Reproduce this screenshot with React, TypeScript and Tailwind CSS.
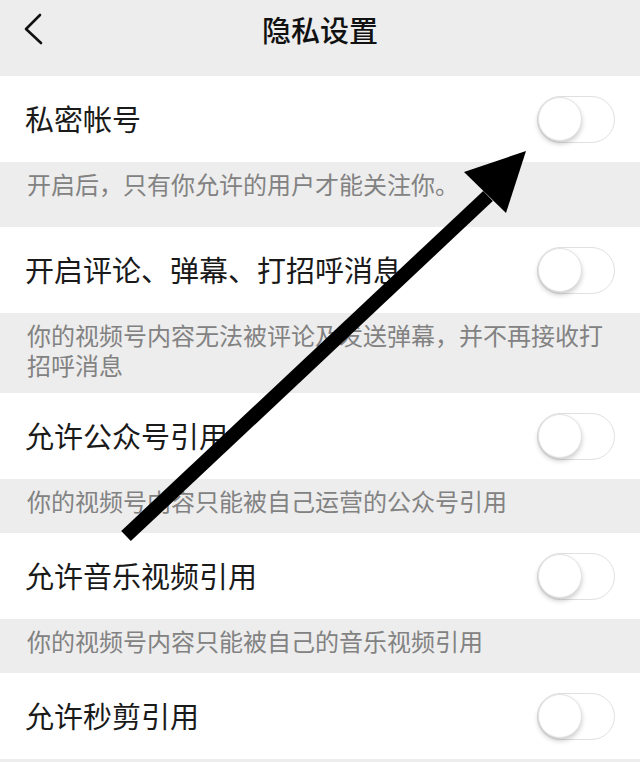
import React from 'react'

const font = { fontFamily: '"Noto Sans CJK SC", "Noto Sans", sans-serif' }

function Toggle() {
  return (
    <div className="relative h-[47px] w-[78px] shrink-0 rounded-full border-[1.5px] border-[#e0e0e0] bg-white">
      <div className="absolute left-[0px] top-[0px] h-[44px] w-[44px] rounded-full border border-[#e2e2e2] bg-white shadow-[0_3px_5px_rgba(0,0,0,0.2)]" />
    </div>
  )
}

const items = [
  { label: '私密帐号', desc: ['开启后，只有你允许的用户才能关注你。'], descCls: 'h-[65px]' },
  { label: '开启评论、弹幕、打招呼消息', desc: ['你的视频号内容无法被评论及发送弹幕，并不再接收打', '招呼消息'], descCls: 'h-[80px]' },
  { label: '允许公众号引用', desc: ['你的视频号内容只能被自己运营的公众号引用'], descCls: 'h-[54px]' },
  { label: '允许音乐视频引用', desc: ['你的视频号内容只能被自己的音乐视频引用'], descCls: 'h-[54px]' },
]

export default function App() {
  return (
    <div className="relative h-[762px] w-[640px] overflow-hidden bg-[#ededed]" style={font}>
      <div className="relative flex h-[60px] items-center justify-center">
        <svg className="absolute left-[22px] top-[12px]" width="24" height="36" viewBox="0 0 24 36">
          <path d="M18 3 L4 17 L19 31" fill="none" stroke="#111" strokeWidth="2.6" strokeLinecap="round" strokeLinejoin="round" />
        </svg>
        <div className="text-[29px] font-medium text-[#111]">隐私设置</div>
      </div>
      <div className="mt-[16px] flex flex-col">
        {items.map((it) => (
          <div key={it.label} className="flex flex-col">
            <div className="flex h-[86px] items-center justify-between bg-white pl-[25px] pr-[25px]">
              <div className="text-[29px] text-[#1a1a1a]">{it.label}</div>
              <Toggle />
            </div>
            <div className={`px-[27px] pt-[7px] text-[24px] leading-[30px] text-[#828282] ${it.descCls}`}>
              {it.desc.map((d) => (
                <div key={d}>{d}</div>
              ))}
            </div>
          </div>
        ))}
        <div className="flex h-[86px] items-center justify-between bg-white pl-[25px] pr-[25px]">
          <div className="text-[29px] text-[#1a1a1a]">允许秒剪引用</div>
          <Toggle />
        </div>
      </div>
      <svg className="pointer-events-none absolute left-0 top-0" width="640" height="762" viewBox="0 0 640 762">
        <line x1="126" y1="536" x2="488" y2="196" stroke="#000" strokeWidth="14" />
        <polygon points="526,151 464,172 506,213" fill="#000" />
      </svg>
    </div>
  )
}
